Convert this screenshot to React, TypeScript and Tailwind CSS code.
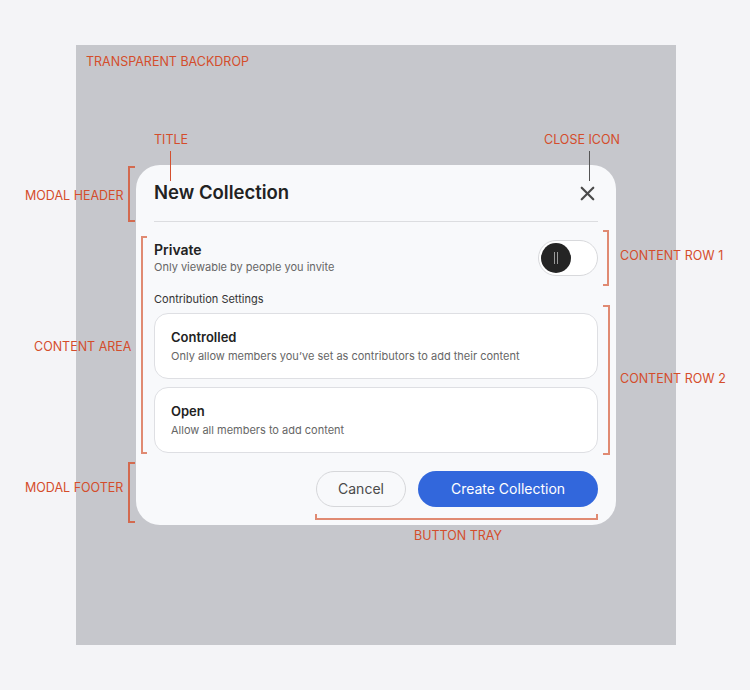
import React from 'react';
import { X } from 'lucide-react';

// Annotated anatomy of a "New Collection" modal
const labelCls = "absolute text-[12.5px] leading-[14px] text-[#d44d2b] whitespace-nowrap";
const lineColor = "border-[#e08a72]";

function OptionCard({ title, desc }: { title: string; desc: string }) {
  return (
    <div className="h-[66px] rounded-[14px] border border-[#dedfe3] bg-white pl-[16px] pt-[14px]">
      <div className="text-[13px] leading-[18px] font-semibold text-[#222]">{title}</div>
      <div className="mt-[2px] text-[11px] leading-[16px] text-[#666]">{desc}</div>
    </div>
  );
}

function Toggle() {
  return (
    <div className="w-[60px] h-[36px] rounded-full border border-[#d8d9dc] bg-white flex items-center pl-[2px]">
      <div className="w-[30px] h-[30px] rounded-full bg-[#242424] flex items-center justify-center gap-[2px]">
        <span className="w-px h-[12px] bg-[#9a9a9a]" />
        <span className="w-px h-[12px] bg-[#9a9a9a]" />
      </div>
    </div>
  );
}

function Modal() {
  return (
    <div className="w-[480px] h-[360px] rounded-[24px] bg-[#f8f9fb] px-[18px] flex flex-col">
      <div className="h-[57px] shrink-0 flex items-center justify-between border-b border-[#dcdde0]">
        <h2 className="text-[18.5px] font-semibold text-[#222]">New Collection</h2>
        <X size={23} strokeWidth={2.3} className="text-[#4a4a4a] -mr-[1px]" />
      </div>

      <div className="mt-[18px] h-[36px] flex items-center justify-between">
        <div>
          <div className="text-[14px] leading-[18px] font-semibold text-[#222]">Private</div>
          <div className="text-[11px] leading-[16px] text-[#666]">Only viewable by people you invite</div>
        </div>
        <Toggle />
      </div>

      <div className="mt-[15px] text-[11px] leading-[16px] text-[#333]">Contribution Settings</div>

      <div className="mt-[6px] flex flex-col gap-[8px]">
        <OptionCard title="Controlled" desc="Only allow members you’ve set as contributors to add their content" />
        <OptionCard title="Open" desc="Allow all members to add content" />
      </div>

      <div className="mt-[18px] flex justify-end gap-[12px]">
        <button className="w-[90px] h-[36px] rounded-full border border-[#d6d7da] bg-transparent text-[14px] leading-[34px] text-[#4a4a4a]">Cancel</button>
        <button className="w-[180px] h-[36px] rounded-full bg-[#3267dc] text-[14px] leading-[34px] text-white">Create Collection</button>
      </div>
    </div>
  );
}

export default function App() {
  return (
    <div className="relative w-[750px] h-[690px] bg-[#f4f4f7] pt-[45px] pl-[76px]" style={{ fontFamily: 'Inter, "Noto Sans", sans-serif' }}>
      <div className="w-[600px] h-[600px] bg-[#c6c7cc] pt-[120px] pl-[60px]">
        <Modal />
      </div>

      {/* annotations */}
      <div className={labelCls} style={{ left: 86, top: 55 }}>TRANSPARENT BACKDROP</div>

      <div className={labelCls} style={{ left: 154, top: 133 }}>TITLE</div>
      <div className="absolute w-px h-[30px] bg-[#d4502f]" style={{ left: 170, top: 151 }} />

      <div className={labelCls} style={{ left: 544, top: 133 }}>CLOSE ICON</div>
      <div className="absolute w-px h-[30px] bg-[#555]" style={{ left: 589, top: 151 }} />

      <div className={labelCls} style={{ left: 25, top: 189 }}>MODAL HEADER</div>
      <div className={`absolute w-[7px] h-[56px] border-l-2 border-y-2 border-[#d36a4f]`} style={{ left: 128, top: 166 }} />

      <div className={labelCls} style={{ left: 34, top: 340 }}>CONTENT AREA</div>
      <div className={`absolute w-[6px] h-[218px] border-l-2 border-y-2 ${lineColor}`} style={{ left: 141, top: 236 }} />

      <div className={labelCls} style={{ left: 25, top: 481 }}>MODAL FOOTER</div>
      <div className={`absolute w-[7px] h-[61px] border-l-2 border-y-2 border-[#d36a4f]`} style={{ left: 128, top: 462 }} />

      <div className={labelCls} style={{ left: 620, top: 249 }}>CONTENT ROW 1</div>
      <div className={`absolute w-[6px] h-[56px] border-r-2 border-y-2 ${lineColor}`} style={{ left: 603, top: 230 }} />

      <div className={labelCls} style={{ left: 620, top: 372 }}>CONTENT ROW 2</div>
      <div className={`absolute w-[7px] h-[150px] border-r-2 border-y-2 ${lineColor}`} style={{ left: 603, top: 305 }} />

      <div className={`absolute w-[283px] h-[6px] border-b-2 border-x-2 ${lineColor}`} style={{ left: 315, top: 514 }} />
      <div className={labelCls} style={{ left: 414, top: 529 }}>BUTTON TRAY</div>
    </div>
  );
}
